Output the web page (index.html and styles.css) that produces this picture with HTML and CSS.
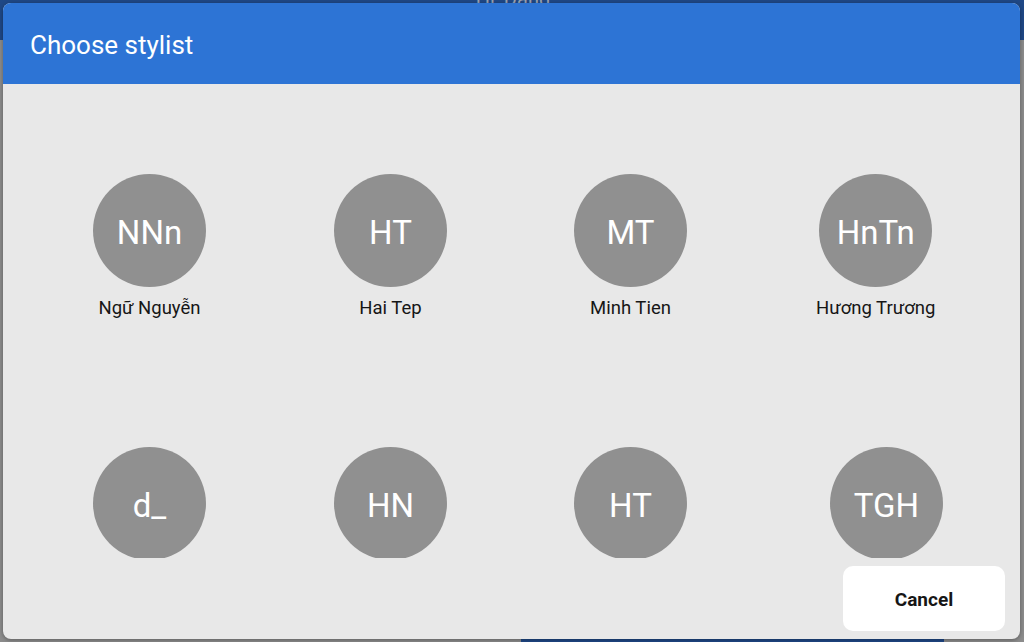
FILE: index.html
```html
<!DOCTYPE html>
<html lang="vi">
<head>
<meta charset="utf-8">
<title>Choose stylist</title>
<link rel="stylesheet" href="styles.css">
</head>
<body>
<div class="app">
  <div class="app-bar"><span class="app-title">Hi, Dang</span></div>
  <div class="app-main"></div>
  <div class="app-bottom"><div class="app-bottom-bar"></div></div>
</div>
<div class="dialog">
  <div class="dialog-header">Choose stylist</div>
  <div class="dialog-body">
    <div class="stylist-grid">
      <div class="stylist"><div class="avatar">NNn</div><div class="name">Ngữ Nguyễn</div></div>
      <div class="stylist"><div class="avatar">HT</div><div class="name">Hai Tep</div></div>
      <div class="stylist"><div class="avatar">MT</div><div class="name">Minh Tien</div></div>
      <div class="stylist"><div class="avatar">HnTn</div><div class="name">Hương Trương</div></div>
      <div class="stylist"><div class="avatar">d_</div><div class="name">dang_</div></div>
      <div class="stylist"><div class="avatar">HN</div><div class="name">Hoa Nguyen</div></div>
      <div class="stylist"><div class="avatar">HT</div><div class="name">Hung Tran</div></div>
      <div class="stylist"><div class="avatar">TGH</div><div class="name">Trương Gia Hưng</div></div>
    </div>
  </div>
  <div class="dialog-footer">
    <button class="cancel-btn">Cancel</button>
  </div>
</div>
</body>
</html>
```

FILE: styles.css
```css
html, body {
  margin: 0;
  padding: 0;
}
body {
  width: 1024px;
  height: 642px;
  overflow: hidden;
  position: relative;
  background: #8c8c8c;
  font-family: Roboto, "Noto Sans", "Liberation Sans", sans-serif;
}
.app {
  display: flex;
  flex-direction: column;
  height: 642px;
}
.app-bar {
  height: 40px;
  background: #1f4886;
  display: flex;
  justify-content: center;
  align-items: flex-start;
  overflow: hidden;
}
.app-title {
  color: #9aa3b3;
  font-size: 20px;
  line-height: 20px;
  margin-top: -11px;
  padding-left: 2px;
}
.app-main {
  flex: 1;
  background: #8c8c8c;
}
.app-bottom {
  height: 40px;
  display: flex;
  padding-left: 521px;
  background: #8c8c8c;
}
.app-bottom-bar {
  width: 423px;
  background: #1f4886;
}
.dialog {
  position: absolute;
  left: 3px;
  top: 3px;
  width: 1017px;
  height: 636px;
  border-radius: 8px;
  overflow: hidden;
  background: #e8e8e8;
  display: flex;
  flex-direction: column;
  box-shadow: 0 1px 4px rgba(0, 0, 0, 0.35);
}
.dialog-header {
  height: 81px;
  flex: none;
  background: #2d74d5;
  color: #ffffff;
  font-size: 26px;
  display: flex;
  align-items: center;
  padding-left: 27px;
  padding-top: 3px;
  box-sizing: border-box;
}
.dialog-body {
  height: 474px;
  flex: none;
  overflow: hidden;
}
.stylist-grid {
  display: grid;
  grid-template-columns: 241px 240px 242px auto;
  row-gap: 128px;
  padding: 90px 0 0 90px;
  justify-items: start;
}
.stylist {
  display: flex;
  flex-direction: column;
  align-items: center;
}
.avatar {
  width: 113px;
  height: 113px;
  border-radius: 50%;
  background: #909090;
  color: #ffffff;
  font-size: 33px;
  display: flex;
  align-items: center;
  justify-content: center;
  padding-top: 4px;
  box-sizing: border-box;
}
.name {
  margin-top: 10px;
  font-size: 18.5px;
  line-height: 22px;
  color: #161616;
  white-space: nowrap;
}
.dialog-footer {
  flex: 1;
  display: flex;
  justify-content: flex-end;
  align-items: flex-start;
  padding: 8px 15px 0 0;
}
.cancel-btn {
  width: 162px;
  height: 65px;
  border: none;
  border-radius: 10px;
  background: #ffffff;
  color: #161616;
  font-family: Roboto, "Noto Sans", "Liberation Sans", sans-serif;
  font-size: 19px;
  font-weight: 700;
  padding: 1px 0 0 0;
  cursor: pointer;
}
```
